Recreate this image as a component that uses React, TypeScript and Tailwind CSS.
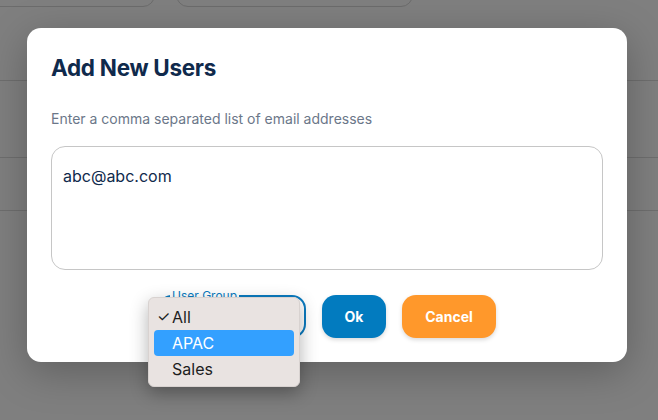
import React from "react";

export default function App() {
  return (
    <div
      className="relative w-[658px] h-[420px] overflow-hidden bg-[#7f7f7f]"
      style={{ fontFamily: "Inter, 'Noto Sans', sans-serif" }}
    >
      {/* underlying page (dimmed) */}
      <div className="flex flex-col">
        <div className="flex gap-[21px] -mt-[33px] -ml-[20px]">
          <div className="w-[175px] h-[40px] rounded-[12px] border border-[#6c6c6c]" />
          <div className="w-[237px] h-[40px] rounded-[12px] border border-[#6c6c6c]" />
        </div>
        <div className="h-[73px]" />
        <div className="h-[77px] border-t border-[#6e6e6e]" />
        <div className="h-[53px] border-t border-[#6e6e6e]" />
        <div className="border-t border-[#6e6e6e]" />
      </div>

      {/* modal */}
      <div className="absolute left-[27px] top-[28px] w-[600px] h-[334px] rounded-[14px] bg-white shadow-[0_10px_40px_rgba(0,0,0,0.25)] px-6 pt-[26px]">
        <h2 className="text-[22.5px] leading-[28px] font-bold text-[#102a4c] tracking-[-0.3px]">
          Add New Users
        </h2>
        <p className="mt-[27px] text-[14px] leading-[20px] text-[#6b7789]">
          Enter a comma separated list of email addresses
        </p>
        <div className="mt-[17px] h-[124px] rounded-[14px] border border-[#c6c6c6] px-[11px] pt-[17px] text-[16px] leading-[24px] text-[#102a4c]">
          abc@abc.com
        </div>
        <div className="mt-[25px] flex justify-center gap-4">
          <div className="relative w-[148px] h-[43px] rounded-[14px] border-2 border-[#0a7bc0]">
            <span className="absolute -top-[8px] left-[10px] bg-white px-[2px] text-[12px] leading-[14px] text-[#0a7bc0]">
              User Group
            </span>
          </div>
          <button className="w-[64px] h-[43px] rounded-[14px] bg-[#027bbf] text-white text-[14px] font-bold shadow-[0_2px_4px_rgba(0,0,0,0.15)]">
            Ok
          </button>
          <button className="w-[94px] h-[43px] rounded-[14px] bg-[#ff982b] text-white text-[14px] font-bold shadow-[0_2px_4px_rgba(0,0,0,0.15)]">
            Cancel
          </button>
        </div>
      </div>

      {/* native dropdown menu */}
      <div className="absolute left-[148px] top-[297px] w-[152px] h-[90px] rounded-[6px] bg-[#e9e3e1] shadow-[0_6px_18px_rgba(0,0,0,0.3)] border border-[#d8d2d0] px-[5px] pt-[6px] text-[16px] text-[#1d1d1d]">
        <div className="relative h-[26px] leading-[26px] pl-[18px]">
          <span className="absolute left-[3px] top-0 text-[15px]">✓</span>
          All
        </div>
        <div className="h-[26px] leading-[26px] pl-[18px] rounded-[4px] bg-[#33a0ff] text-white">
          APAC
        </div>
        <div className="h-[26px] leading-[26px] pl-[18px]">Sales</div>
      </div>
    </div>
  );
}
